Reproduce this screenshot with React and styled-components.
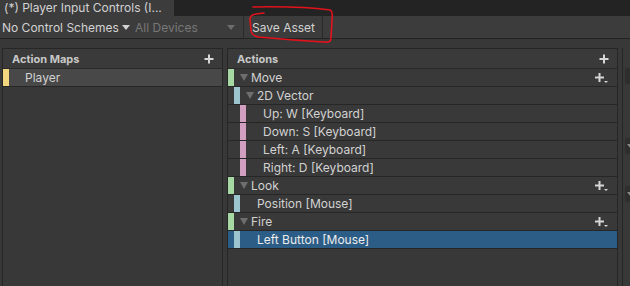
import styled, { createGlobalStyle } from "styled-components";

const Global = createGlobalStyle`
  html, body {
    margin: 0;
    padding: 0;
    background: #383838;
  }
  body {
    font-family: Inter, "Noto Sans", sans-serif;
    -webkit-font-smoothing: antialiased;
  }
`;

const Window = styled.div`
  position: relative;
  width: 630px;
  height: 286px;
  overflow: hidden;
  background: #383838;
  display: flex;
  flex-direction: column;
  color: #d2d2d2;
  font-size: 12px;
`;

const TabBar = styled.div`
  height: 16px;
  background: #232323;
  display: flex;
  flex-shrink: 0;
`;

const Tab = styled.div`
  width: 170px;
  background: #3c3c3c;
  padding-left: 4px;
  line-height: 16px;
  white-space: nowrap;
  color: #d2d2d2;
`;

const Toolbar = styled.div`
  height: 22px;
  background: #3c3c3c;
  border-bottom: 1px solid #232323;
  display: flex;
  align-items: stretch;
  flex-shrink: 0;
`;

const Dropdown = styled.div`
  display: flex;
  align-items: center;
  justify-content: ${(p) => (p.$spread ? "space-between" : "flex-start")};
  width: ${(p) => p.$width}px;
  padding: 0 ${(p) => (p.$spread ? 8 : 0)}px 0 ${(p) => p.$pad}px;
  box-sizing: border-box;
  color: ${(p) => (p.$disabled ? "#777777" : "#d2d2d2")};
  gap: 3px;
  white-space: nowrap;
`;

const Caret = ({ color }) => (
  <svg width="8" height="5" viewBox="0 0 8 5">
    <path d="M0 0 H8 L4 5 Z" fill={color} />
  </svg>
);

const ToolButton = styled.div`
  display: flex;
  align-items: center;
  padding: 0 7px 0 8px;
  border-left: 1px solid #2a2a2a;
  border-right: 1px solid #2a2a2a;
  color: #d2d2d2;
  white-space: nowrap;
`;

const Body = styled.div`
  flex: 1;
  display: flex;
  padding-top: 9px;
  min-height: 0;
`;

const Pane = styled.div`
  width: ${(p) => p.$width}px;
  flex-shrink: 0;
  margin-left: ${(p) => p.$gap}px;
  border: 1px solid #262626;
  border-bottom: none;
  box-sizing: border-box;
  display: flex;
  flex-direction: column;
  background: #383838;
`;

const PaneHeader = styled.div`
  height: 19px;
  border-bottom: 1px solid #2a2a2a;
  display: flex;
  align-items: center;
  justify-content: space-between;
  padding: 0 8px 0 9px;
  font-size: 11px;
  font-weight: 700;
  color: #c8c8c8;
  background: #3a3a3a;
`;

const Row = styled.div`
  height: 17px;
  border-bottom: 1px solid #262626;
  display: flex;
  align-items: center;
  padding-left: ${(p) => p.$level * 6}px;
  padding-right: 9px;
  background: ${(p) => (p.$selected ? "#2c5d87" : p.$active ? "#484848" : "#393939")};
  color: ${(p) => (p.$selected ? "#ececec" : "#d2d2d2")};
  white-space: nowrap;
  line-height: 18px;
`;

const Bar = styled.span`
  width: 6px;
  align-self: stretch;
  background: ${(p) => p.$color};
  flex-shrink: 0;
`;

const Fold = styled.span`
  width: 11px;
  margin-left: 6px;
  display: flex;
  align-items: center;
  flex-shrink: 0;
`;

const Label = styled.span`
  flex: 1;
  margin-left: ${(p) => p.$indent || 0}px;
`;

const SideStub = styled.div`
  margin-left: 4px;
  flex: 1;
  border-left: 1px solid #262626;
  display: flex;
  flex-direction: column;
  padding-top: 20px;
`;

const StubField = styled.div`
  height: 16px;
  margin: ${(p) => p.$top}px 0 0 2px;
  background: #2e2e2e;
  border-radius: 2px 0 0 2px;
  display: flex;
  align-items: center;
  padding-left: 2px;
`;

const Annotation = styled.svg`
  position: absolute;
  left: 0;
  top: 0;
  pointer-events: none;
`;

const Plus = () => (
  <svg width="10" height="10" viewBox="0 0 10 10">
    <path d="M5 0.5 V9.5 M0.5 5 H9.5" stroke="#d6d6d6" strokeWidth="2" />
  </svg>
);

const PlusMenu = () => (
  <svg width="13" height="12" viewBox="0 0 13 12">
    <path d="M4.5 1 V10 M0 5.5 H9" stroke="#d6d6d6" strokeWidth="2" />
    <path d="M9 9 H13 L11 11 Z" fill="#d6d6d6" />
  </svg>
);

const colors = {
  action: "#a6d8a4",
  binding: "#9cc5cf",
  part: "#d39fc0",
};

const rows = [
  { label: "Move", level: 0, color: colors.action, fold: true, add: true },
  { label: "2D Vector", level: 1, color: colors.binding, fold: true },
  { label: "Up: W [Keyboard]", level: 2, color: colors.part },
  { label: "Down: S [Keyboard]", level: 2, color: colors.part },
  { label: "Left: A [Keyboard]", level: 2, color: colors.part },
  { label: "Right: D [Keyboard]", level: 2, color: colors.part },
  { label: "Look", level: 0, color: colors.action, fold: true, add: true },
  { label: "Position [Mouse]", level: 1, color: colors.binding },
  { label: "Fire", level: 0, color: colors.action, fold: true, add: true },
  { label: "Left Button [Mouse]", level: 1, color: colors.binding, selected: true },
];

const App = () => {
  return (
    <Window>
      <Global />
      <TabBar>
        <Tab>(*) Player Input Controls (I...</Tab>
      </TabBar>
      <Toolbar>
        <Dropdown $width={133} $pad={2}>
          No Control Schemes
          <Caret color="#d2d2d2" />
        </Dropdown>
        <Dropdown $width={110} $pad={2} $spread $disabled>
          All Devices
          <Caret color="#6c6c6c" />
        </Dropdown>
        <ToolButton>Save Asset</ToolButton>
      </Toolbar>
      <Body>
        <Pane $width={221} $gap={2}>
          <PaneHeader>
            Action Maps
            <Plus />
          </PaneHeader>
          <Row $level={0} $active>
            <Bar $color="#f3d77e" />
            <Label $indent={16}>Player</Label>
          </Row>
        </Pane>
        <Pane $width={391} $gap={4}>
          <PaneHeader>
            Actions
            <Plus />
          </PaneHeader>
          {rows.map((r) => (
            <Row key={r.label} $level={r.level} $selected={r.selected}>
              <Bar $color={r.color} />
              <Fold>
                {r.fold && (
                  <svg width="8" height="7" viewBox="0 0 8 7">
                    <path d="M0 0 H8 L4 7 Z" fill="#6e6e6e" />
                  </svg>
                )}
              </Fold>
              <Label>{r.label}</Label>
              {r.add && <PlusMenu />}
            </Row>
          ))}
        </Pane>
        <SideStub>
          <StubField $top={0} />
          <StubField $top={54}>
            <Caret color="#8a8a8a" />
          </StubField>
          <StubField $top={32}>
            <Caret color="#8a8a8a" />
          </StubField>
        </SideStub>
      </Body>
      <Annotation width="630" height="50" viewBox="0 0 630 50">
        <path
          d="M253 7 Q300 6 330 10 Q333 11 332 20 L331 38 Q331 43 324 42 Q290 40 258 37 Q251 35 251 30 L250 19 Q250 15 256 14 L264 13"
          fill="none"
          stroke="#e3121c"
          strokeWidth="1.6"
          strokeLinecap="round"
        />
      </Annotation>
    </Window>
  );
};

export default App;
